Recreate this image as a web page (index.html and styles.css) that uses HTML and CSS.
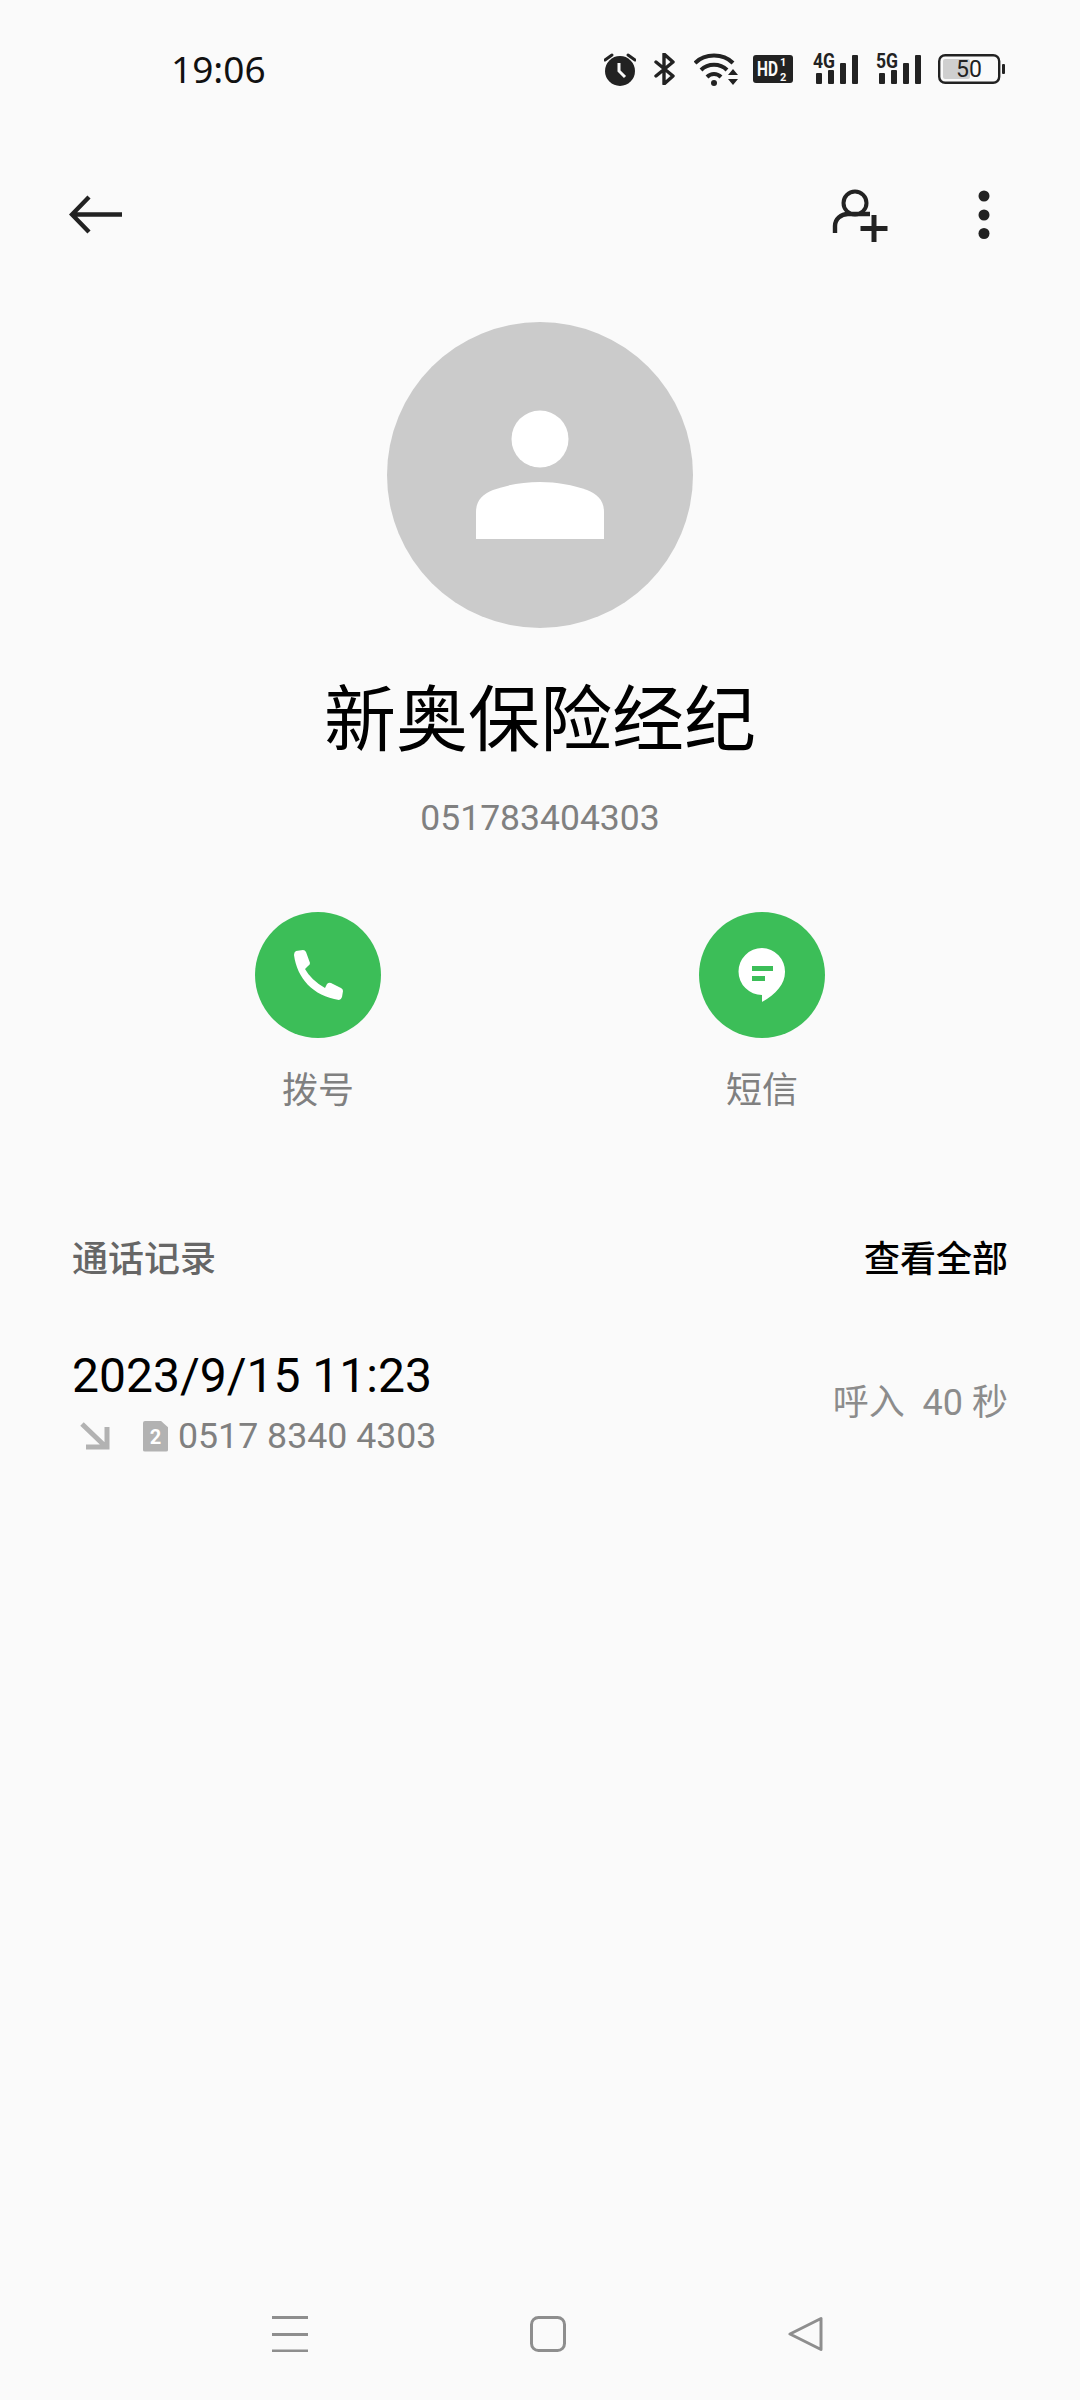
FILE: index.html
```html
<!DOCTYPE html>
<html lang="zh">
<head>
<meta charset="utf-8">
<title>新奥保险经纪</title>
<link rel="stylesheet" href="styles.css">
</head>
<body>
<div class="page">
  <header class="status">
    <span class="time">19:06</span>
    <div class="status-icons">
      <svg class="ic-alarm" width="32" height="34" viewBox="0 0 32 34"><path d="M1 8 L8 3 M31 8 L24 3" stroke="#222" stroke-width="3" stroke-linecap="round" fill="none"/><circle cx="16" cy="19" r="15" fill="#222"/><path d="M15 11 V19 L21 25" stroke="#fafafa" stroke-width="3" fill="none"/></svg>
      <svg class="ic-bt" width="21" height="32" viewBox="0 0 21 32"><path d="M2 9 L19 23 L10 31 V1 L19 9 L2 23" stroke="#222" stroke-width="3.4" fill="none" stroke-linejoin="round" stroke-linecap="round"/></svg>
      <svg class="ic-wifi" width="44" height="33" viewBox="0 0 44 33"><g fill="none" stroke="#222" stroke-width="4"><path d="M1 10 C11 0 29 0 39 10"/><path d="M7 17 C14 10 26 10 33 17"/><path d="M13 24 C17 20 23 20 27 24"/></g><circle cx="20" cy="30" r="3" fill="#222"/><path d="M34 22 L39 16 L44 22 Z M34 26 L44 26 L39 32 Z" fill="#222"/></svg>
      <svg class="ic-hd" width="40" height="28" viewBox="0 0 40 28"><rect width="40" height="28" rx="3" fill="#222"/><text x="4" y="21" class="hd-text" textLength="21" lengthAdjust="spacingAndGlyphs">HD</text><text x="27" y="11" class="hd-sub">1</text><text x="27" y="25.500" class="hd-sub">2</text></svg>
      <svg class="ic-sig" width="46" height="44" viewBox="0 -6 46 44"><text x="0" y="15" class="sig-text" textLength="22" lengthAdjust="spacingAndGlyphs">4G</text><rect x="3" y="20" width="6" height="11" rx="1" fill="#222"/><rect x="15" y="17" width="6" height="14" rx="1" fill="#222"/><rect x="27" y="10" width="6" height="21" rx="1" fill="#222"/><rect x="39" y="2" width="6" height="29" rx="1" fill="#222"/></svg>
      <svg class="ic-sig" width="46" height="44" viewBox="0 -6 46 44"><text x="0" y="15" class="sig-text" textLength="22" lengthAdjust="spacingAndGlyphs">5G</text><rect x="3" y="20" width="6" height="11" rx="1" fill="#222"/><rect x="15" y="17" width="6" height="14" rx="1" fill="#222"/><rect x="27" y="10" width="6" height="21" rx="1" fill="#222"/><rect x="39" y="2" width="6" height="29" rx="1" fill="#222"/></svg>
      <svg class="ic-batt" width="67" height="30" viewBox="0 0 67 30"><rect x="1.2" y="1.2" width="60" height="27.6" rx="6" fill="none" stroke="#222" stroke-width="2.4"/><rect x="5" y="5" width="27" height="20" rx="2" fill="#cfcfcf"/><rect x="64" y="10" width="3" height="10" rx="1" fill="#222"/><text x="31" y="23" class="batt-text">50</text></svg>
    </div>
  </header>

  <nav class="toolbar">
    <svg class="tool-back" width="54" height="40" viewBox="0 0 54 40"><path d="M53 19.500 H3 M20 2 L3 19.500 L20 37" fill="none" stroke="#222" stroke-width="4.400"/></svg>
    <div class="tool-right">
      <svg width="60" height="56" viewBox="0 0 60 56"><circle cx="23" cy="16" r="11.500" fill="none" stroke="#222" stroke-width="4"/><path d="M3 46 V39 C3 32 9 27 16 27 H38" fill="none" stroke="#222" stroke-width="4.400"/><path d="M42 28 V55 M28.500 41.500 H55.500" fill="none" stroke="#222" stroke-width="5"/></svg>
      <svg width="12" height="50" viewBox="0 0 12 50"><circle cx="6" cy="6" r="5.500" fill="#222"/><circle cx="6" cy="25" r="5.500" fill="#222"/><circle cx="6" cy="43.500" r="5.500" fill="#222"/></svg>
    </div>
  </nav>

  <section class="profile">
    <svg class="avatar" width="306" height="306" viewBox="0 0 306 306"><circle cx="153" cy="153" r="153" fill="#cbcbcb"/><circle cx="153" cy="117" r="28.500" fill="#fff"/><path d="M89 217 V190 C89 178 96 172 106 168 C120 163 136 160 153 160 C170 160 186 163 200 168 C210 172 217 178 217 190 V217 Z" fill="#fff"/></svg>
    <h1 class="name">新奥保险经纪</h1>
    <p class="number">051783404303</p>
  </section>

  <section class="actions">
    <div class="action">
      <div class="action-circle">
        <svg width="50" height="50" viewBox="0 0 50 50"><path d="M3 1 L10 0 Q12 0 13 2 L17 13 Q17 15 15 16 L12 19 Q18 30 32 38 L34 34 Q36 32 38 33 L48 38 Q50 39 50 41 L49 47 Q48 50 46 50 C20 46 4 28 1 5 Q1 2 3 1 Z" fill="#fff"/></svg>
      </div>
      <span class="action-label">拨号</span>
    </div>
    <div class="action">
      <div class="action-circle">
        <svg width="48" height="54" viewBox="0 0 48 54"><path d="M24 0 A23.500 23.500 0 0 1 47 24 C47 36 38 46 24 54 V47 A23.500 23.500 0 0 1 24 0 Z" fill="#fff"/><rect x="14" y="18" width="21" height="5" fill="#3cbe58"/><rect x="14" y="28" width="13" height="5" fill="#3cbe58"/></svg>
      </div>
      <span class="action-label">短信</span>
    </div>
  </section>

  <section class="log">
    <div class="log-head">
      <span class="log-title">通话记录</span>
      <span class="log-all">查看全部</span>
    </div>
    <div class="log-row">
      <div class="log-main">
        <div class="log-date">2023/9/15 11:23</div>
        <div class="log-sub">
          <svg class="log-arrow" width="30" height="28" viewBox="0 0 30 28"><path d="M2 2 L26 25 M27 5 V25 H6" fill="none" stroke="#b2b2b2" stroke-width="5"/></svg>
          <span class="sim">2</span>
          <span class="log-num">0517 8340 4303</span>
        </div>
      </div>
      <div class="log-dur">呼入&nbsp;&nbsp;40 秒</div>
    </div>
  </section>

  <footer class="navbar">
    <svg width="36" height="36" viewBox="0 0 36 36"><path d="M0 1.500 H36 M0 18.500 H36 M0 35 H36" stroke="#8e8e8e" stroke-width="3" fill="none"/></svg>
    <svg width="36" height="36" viewBox="0 0 36 36"><rect x="1.500" y="1.500" width="33" height="33" rx="7" fill="none" stroke="#8e8e8e" stroke-width="3"/></svg>
    <svg width="36" height="36" viewBox="0 0 36 36"><path d="M33 2.500 V33.500 L2 18 Z" fill="none" stroke="#8e8e8e" stroke-width="3" stroke-linejoin="round"/></svg>
  </footer>
</div>
</body>
</html>
```

FILE: styles.css
```css
* { box-sizing: border-box; }
html, body { margin: 0; padding: 0; }
body {
  background: #fafafa;
  font-family: Roboto, "Noto Sans CJK SC", sans-serif;
  color: #000;
}
.page {
  width: 1080px;
  height: 2400px;
  display: flex;
  flex-direction: column;
  overflow: hidden;
}
.status {
  height: 138px;
  display: flex;
  align-items: center;
  justify-content: space-between;
  padding: 0 75px 0 171px;
}
.time {
  font-family: "Noto Sans", Roboto, sans-serif;
  font-size: 37px;
  line-height: 40px;
  color: #111;
}
.status-icons { display: flex; align-items: center; }
.status-icons svg { display: block; flex: none; }
.ic-alarm { margin-right: 18px; }
.ic-bt { margin-right: 19px; }
.ic-wifi { margin-right: 15px; }
.ic-hd { margin-right: 20px; }
.ic-sig { margin-right: 17px; }
.ic-sig + .ic-batt { margin-left: -1px; }
.hd-text { font: 700 21px Roboto, sans-serif; fill: #fafafa; }
.hd-sub { font: 700 11px Roboto, sans-serif; fill: #fafafa; }
.sig-text { font: 700 20px Roboto, sans-serif; fill: #222; }
.batt-text { font: 400 23px Roboto, sans-serif; fill: #222; text-anchor: middle; }

.toolbar {
  height: 152px;
  display: flex;
  align-items: center;
  justify-content: space-between;
  padding: 2px 90px 0 69px;
}
.toolbar svg { display: block; }
.tool-right { display: flex; align-items: center; gap: 86px; }

.profile { display: flex; flex-direction: column; align-items: center; margin-top: 32px; }
.avatar { display: block; }
.name {
  margin: 41px 0 0;
  font-size: 72px;
  font-weight: 400;
  line-height: 90px;
  font-family: "Noto Sans CJK SC", sans-serif;
}
.number {
  margin: 37px 0 0;
  font-size: 35.500px;
  line-height: 44px;
  color: #808080;
}

.actions {
  display: grid;
  grid-template-columns: 222px 222px;
  gap: 222px;
  justify-content: center;
  margin-top: 72px;
}
.action { display: flex; flex-direction: column; align-items: center; }
.action-circle {
  width: 126px;
  height: 126px;
  border-radius: 50%;
  background: #3cbe58;
  display: flex;
  align-items: center;
  justify-content: center;
}
.action-circle svg { display: block; }
.action-label {
  margin-top: 23px;
  font-size: 36px;
  line-height: 52px;
  color: #808080;
  font-family: "Noto Sans CJK SC", sans-serif;
}

.log { margin-top: 117px; padding: 0 72px; }
.log-head { display: flex; justify-content: space-between; align-items: center; height: 52px; }
.log-title {
  font-size: 36px;
  font-weight: 500;
  color: #666;
  font-family: "Noto Sans CJK SC", sans-serif;
}
.log-all {
  font-size: 36px;
  font-weight: 500;
  color: #000;
  font-family: "Noto Sans CJK SC", sans-serif;
}
.log-row {
  margin-top: 66px;
  display: flex;
  justify-content: space-between;
  align-items: center;
}
.log-date { font-size: 48px; line-height: 56px; }
.log-sub { display: flex; align-items: center; height: 44px; margin-top: 10px; }
.log-arrow { display: block; margin-left: 8px; margin-right: 33px; }
.sim {
  width: 25px;
  height: 31px;
  background: #b2b2b2;
  color: #fff;
  border-radius: 2px;
  clip-path: polygon(0 0, 70% 0, 100% 22%, 100% 100%, 0 100%);
  font-size: 20px;
  font-weight: 700;
  line-height: 33px;
  text-align: center;
  margin-right: 10px;
}
.log-num { font-size: 35.700px; color: #808080; line-height: 44px; }
.log-dur {
  margin-bottom: 8px;
  font-size: 36px;
  color: #8c8c8c;
  font-family: Roboto, "Noto Sans CJK SC", sans-serif;
}

.navbar {
  margin-top: auto;
  display: flex;
  gap: 222px;
  padding: 0 0 48px 272px;
}
.navbar svg { display: block; }
```
